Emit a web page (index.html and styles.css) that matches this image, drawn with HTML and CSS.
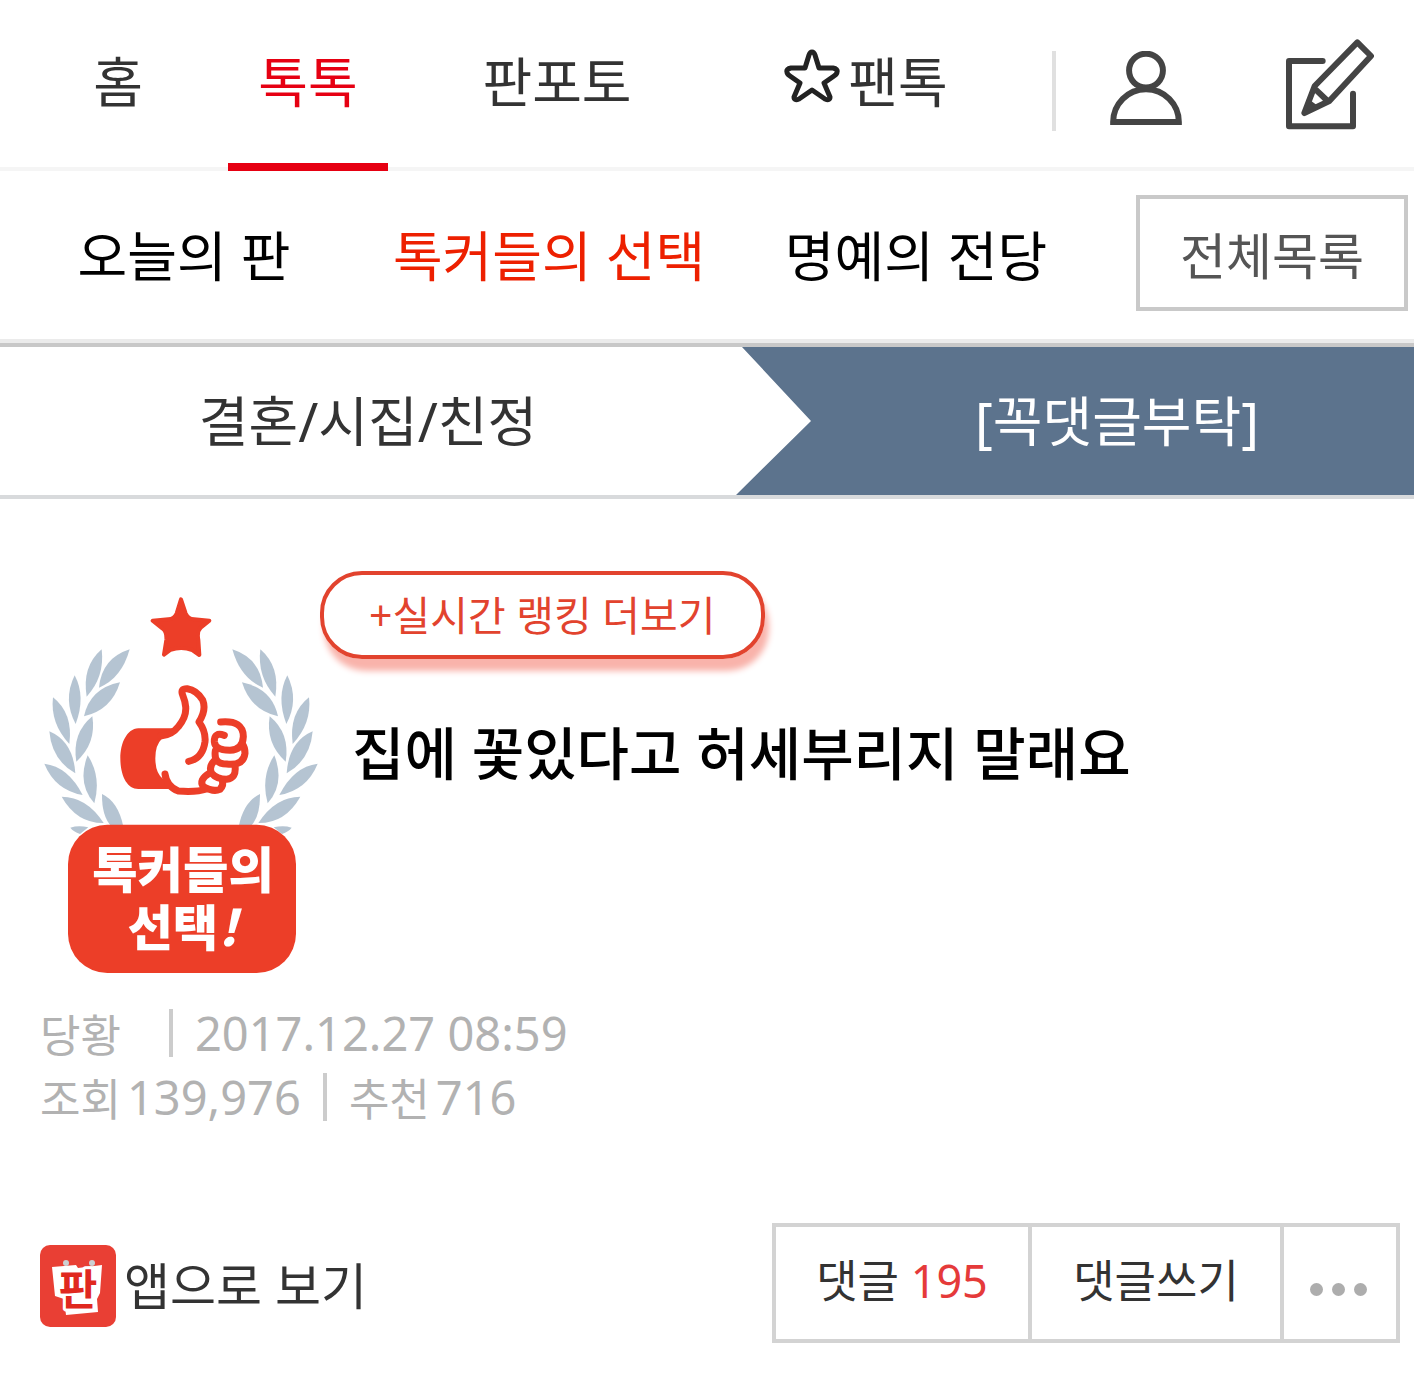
FILE: index.html
```html
<!DOCTYPE html>
<html lang="ko">
<head>
    <meta charset="UTF-8">
    <meta name="viewport" content="width=device-width, initial-scale=1.0">
    <title>집에 꽃있다고 허세부리지 말래요</title>
    <link rel="stylesheet" href="styles.css">
</head>
<body>
    <header>
        <nav class="main-nav">
            <a href="#">홈</a>
            <a href="#" class="active">톡톡</a>
            <a href="#">판포토</a>
            <a href="#" class="fan">
                <svg class="icon-star" viewBox="0 0 56 54"><path d="M28 3Q30 3 31 6L35 19L49 19Q54 20 53 23Q53 25 50 27L40 34L46 48Q46 52 41 50L28 41L15 50Q10 52 10 48L16 34L6 27Q3 25 3 23Q2 20 7 19L21 19L25 6Q26 3 28 3Z"/></svg>팬톡
            </a>
            <div class="tools">
                <a href="#" aria-label="내 정보">
                    <svg class="icon-user" viewBox="90 92 216 223"><circle cx="198" cy="151" r="51"/><path d="M99 306A99 99 0 0 1 297 306Z"/></svg>
                </a>
                <a href="#" aria-label="글쓰기">
                    <svg class="icon-write" viewBox="618 54 264 274"><path d="M728 122H627V318H819V220M832 66L873 107L748 242L673 278L704 197ZM704 205L743 242"/><path class="tip" d="M673 278L684 240L714 262Z"/></svg>
                </a>
            </div>
        </nav>
        <nav class="sub-nav">
            <a href="#">오늘의 판</a>
            <a href="#" class="active">톡커들의 선택</a>
            <a href="#">명예의 전당</a>
            <button type="button">전체목록</button>
        </nav>
    </header>

    <div class="channel">
        <a href="#" class="category">결혼/시집/친정</a>
        <a href="#" class="topic">[꼭댓글부탁]</a>
    </div>

    <main class="post">
        <div class="post-head">
            <svg class="badge" viewBox="39 111 828 1128">
                <defs>
                    <g id="laurel">
                        <path d="M215 268Q155 320 170 410Q225 350 215 268Z"/>
                        <path d="M299 268Q215 295 207 383Q275 355 299 268Z"/>
                        <path d="M134 346Q98 420 137 492Q168 410 134 346Z"/>
                        <path d="M270 367Q180 385 162 469Q245 450 270 367Z"/>
                        <path d="M69 412Q60 490 118 552Q130 460 69 412Z"/>
                        <path d="M187 469Q125 520 139 605Q200 550 187 469Z"/>
                        <path d="M58 514Q65 600 136 640Q130 545 58 514Z"/>
                        <path d="M173 586Q140 670 193 730Q215 650 173 586Z"/>
                        <path d="M43 611Q75 690 158 705Q115 620 43 611Z"/>
                        <path d="M95 710Q140 790 221 789Q170 710 95 710Z"/>
                        <path d="M216 702Q215 770 245 800L280 800Q265 725 216 702Z"/>
                        <path d="M121 803Q145 795 175 802L150 822Q130 815 121 803Z"/>
                    </g>
                </defs>
                <use href="#laurel" class="leaf"/>
                <use href="#laurel" class="leaf" transform="matrix(-1 0 0 1 906 0)"/>
                <path class="star" d="M453 118L467 160Q473 176 492 178L538 182L513 202Q500 214 505 240L508 285L487 270Q453 258 421 270L402 284L409 240Q411 214 397 205L368 182L415 178Q434 176 440 160Z"/>
                <path class="fill" d="M430 505H325C290 507 271 550 271 595C271 645 290 687 325 687H425L412 640L400 658Q376 640 376 595Q376 555 395 537Z"/>
                <g class="hand">
                    <path d="M392 528Q425 526 445 500Q470 470 467 440Q466 425 458 405Q450 385 472 386Q500 390 518 420Q530 450 507 486Q528 515 525 545Q518 595 476 604"/>
                    <path d="M405 642Q410 680 445 693Q500 697 530 687"/>
                    <path d="M572 486Q640 480 640 530Q638 570 600 571Q555 570 553 545Q552 515 583 526"/>
                    <path d="M556 572Q550 612 590 612Q640 618 645 580Q645 562 637 552"/>
                    <path d="M553 602Q535 620 545 640Q560 658 590 658Q620 655 615 617"/>
                    <path d="M538 640Q505 660 520 680Q550 697 570 688Q582 675 577 660"/>
                </g>
                <rect class="fill" x="114" y="794" width="684" height="445" rx="118"/>
                <text><tspan x="459" y="984">톡커들의</tspan><tspan x="458" y="1158">선택</tspan><tspan class="mark">!</tspan></text>
            </svg>
            <div class="post-info">
                <a href="#" class="ranking">+실시간 랭킹 더보기</a>
                <h1>집에 꽃있다고 허세부리지 말래요</h1>
            </div>
        </div>

        <div class="meta">
            <p><span class="writer">당황</span><span class="bar"></span><span class="num">2017.12.27 08:59</span></p>
            <p><span>조회</span><span class="num count">139,976</span><span class="bar"></span><span>추천</span><span class="num count">716</span></p>
        </div>

        <div class="actions">
            <a href="#" class="app-link">
                <svg class="icon-app" viewBox="0 0 76 82">
                    <rect width="76" height="82" rx="10" fill="#e93f34"/>
                    <path d="M12 22L36 20L38 23L62 20L60 48L57 54L58 67L26 70L24 54L15 51Z" fill="#fff"/>
                    <text x="38" y="60">판</text>
                    <circle cx="26" cy="18" r="3" fill="#ccd0d2"/>
                    <circle cx="52" cy="18" r="3" fill="#ccd0d2"/>
                </svg>
                앱으로 보기
            </a>
            <div class="comment-buttons">
                <button type="button">댓글 <em>195</em></button>
                <button type="button">댓글쓰기</button>
                <button type="button" class="more" aria-label="더보기"><i></i><i></i><i></i></button>
            </div>
        </div>
    </main>
</body>
</html>
```

FILE: styles.css
```css
* {
    box-sizing: border-box;
}
body {
    margin: 0;
    font-family: "Noto Sans", "Noto Sans CJK KR", sans-serif;
    background-color: #fff;
    color: #333;
}
a {
    color: inherit;
    text-decoration: none;
}
button {
    font-family: inherit;
    color: inherit;
    background-color: #fff;
    padding: 0;
    cursor: pointer;
}
svg {
    display: block;
    flex: none;
}

/* top menu */
.main-nav {
    display: grid;
    grid-template-columns: 220fr 160fr 338fr 280fr 408fr;
    height: 171px;
    padding-left: 8px;
    border-bottom: 4px solid #f5f5f5;
    font-size: 54px;
    line-height: 80px;
}
.main-nav > a {
    display: flex;
    justify-content: center;
    height: 171px;
    padding-top: 42px;
}
.main-nav .active {
    color: #e60012;
    border-bottom: 8px solid #e60012;
}
.main-nav .fan {
    gap: 8px;
}
.icon-star {
    width: 56px;
    height: 54px;
    margin-top: 7px;
    fill: none;
    stroke: #222;
    stroke-width: 5;
    stroke-linejoin: round;
}
.tools {
    display: flex;
    align-items: center;
    justify-content: space-between;
    height: 80px;
    margin: 51px 40px 0 46px;
    padding-left: 54px;
    border-left: 4px solid #e0e0e0;
}
.tools svg {
    fill: none;
    stroke: #444;
    stroke-width: 18;
    stroke-linejoin: round;
    stroke-linecap: round;
}
.tools .icon-user {
    width: 72px;
    height: 74px;
    margin-bottom: 6px;
    stroke-linejoin: miter;
}
.tools .icon-write {
    width: 88px;
    height: 92px;
    margin-bottom: 14px;
}
.tools .tip {
    fill: #444;
    stroke-width: 8;
}

.sub-nav {
    display: grid;
    grid-template-columns: 368fr 362fr 372fr 34fr 272px;
    align-items: center;
    height: 172px;
    padding: 0 6px 4px 0;
    border-bottom: 4px solid #ebebeb;
    font-size: 54px;
    color: #000;
    text-align: center;
}
.sub-nav .active {
    color: #ed2000;
}
.sub-nav button {
    grid-column: 5;
    height: 116px;
    border: 4px solid #c9c9c9;
    font-size: 50px;
    color: #555;
}

/* category > topic */
.channel {
    display: grid;
    grid-template-columns: 736fr 678fr;
    border-top: 4px solid #c8c8c8;
    border-bottom: 4px solid #d8dadc;
    font-size: 54px;
    line-height: 148px;
    text-align: center;
}
.channel .topic {
    padding-left: 84px;
    background-color: #5c738d;
    clip-path: polygon(6px 0, 100% 0, 100% 100%, 0 100%, 75px 50%);
    color: #fff;
}

.post {
    padding: 72px 14px 32px 40px;
}
.post-head {
    display: flex;
    gap: 0 1px;
}
.badge {
    width: 276px;
    height: 376px;
    margin: 26px 0 0 3px;
}
.badge .leaf {
    fill: #b5c4d2;
}
.badge .fill {
    fill: #ec3e28;
}
.badge .star {
    fill: #ec3e28;
    stroke: #ec3e28;
    stroke-width: 12;
    stroke-linejoin: round;
}
.badge .hand {
    fill: none;
    stroke: #ec3e28;
    stroke-width: 21;
    stroke-linecap: round;
    stroke-linejoin: round;
}
.badge text {
    font-family: "Noto Sans CJK KR", sans-serif;
    font-size: 148px;
    font-weight: 900;
    fill: #fff;
    text-anchor: middle;
}
.badge .mark {
    font-style: italic;
}
.ranking {
    display: inline-block;
    padding: 0 45px;
    border: 4px solid #e2432e;
    border-radius: 42px;
    box-shadow: 4px 12px 6px #f9b3ab;
    font-size: 41px;
    line-height: 80px;
    color: #e2432e;
}
.post-info h1 {
    margin: 46px 0 0 32px;
    font-size: 57px;
    font-weight: 500;
    line-height: 96px;
    color: #000;
}

.meta {
    margin-top: 28px;
    font-size: 44px;
    color: #b2b2b2;
}
.meta p {
    display: flex;
    align-items: center;
    height: 64px;
    margin: 0;
}
.meta .num {
    font-size: 47px;
}
.meta .count {
    margin-left: 6px;
}
.meta .writer {
    margin-right: 26px;
}
.meta .bar {
    width: 4px;
    height: 48px;
    margin: 0 22px;
    background-color: #ccc;
}

.actions {
    display: flex;
    align-items: center;
    justify-content: space-between;
    margin-top: 94px;
}
.app-link {
    display: flex;
    align-items: center;
    gap: 8px;
    font-size: 50px;
}
.icon-app {
    width: 76px;
    height: 82px;
    margin-top: 6px;
}
.icon-app text {
    font-family: "Noto Sans CJK KR", sans-serif;
    font-size: 42px;
    font-weight: 700;
    fill: #e0281f;
    stroke: #fff;
    stroke-width: 6;
    stroke-linejoin: round;
    paint-order: stroke;
    text-anchor: middle;
}
.comment-buttons {
    display: flex;
    border: 4px solid #d3d3d3;
}
.comment-buttons button {
    width: 252px;
    height: 112px;
    padding-bottom: 10px;
    border: 0;
    font-size: 45px;
}
.comment-buttons button + button {
    border-left: 4px solid #d3d3d3;
}
.comment-buttons em {
    font-style: normal;
    color: #e53a3a;
}
.comment-buttons .more {
    display: flex;
    align-items: center;
    justify-content: center;
    gap: 9px;
    width: 116px;
    padding: 12px 4px 0 0;
}
.more i {
    width: 13px;
    height: 13px;
    border-radius: 50%;
    background-color: #adadad;
}
```
